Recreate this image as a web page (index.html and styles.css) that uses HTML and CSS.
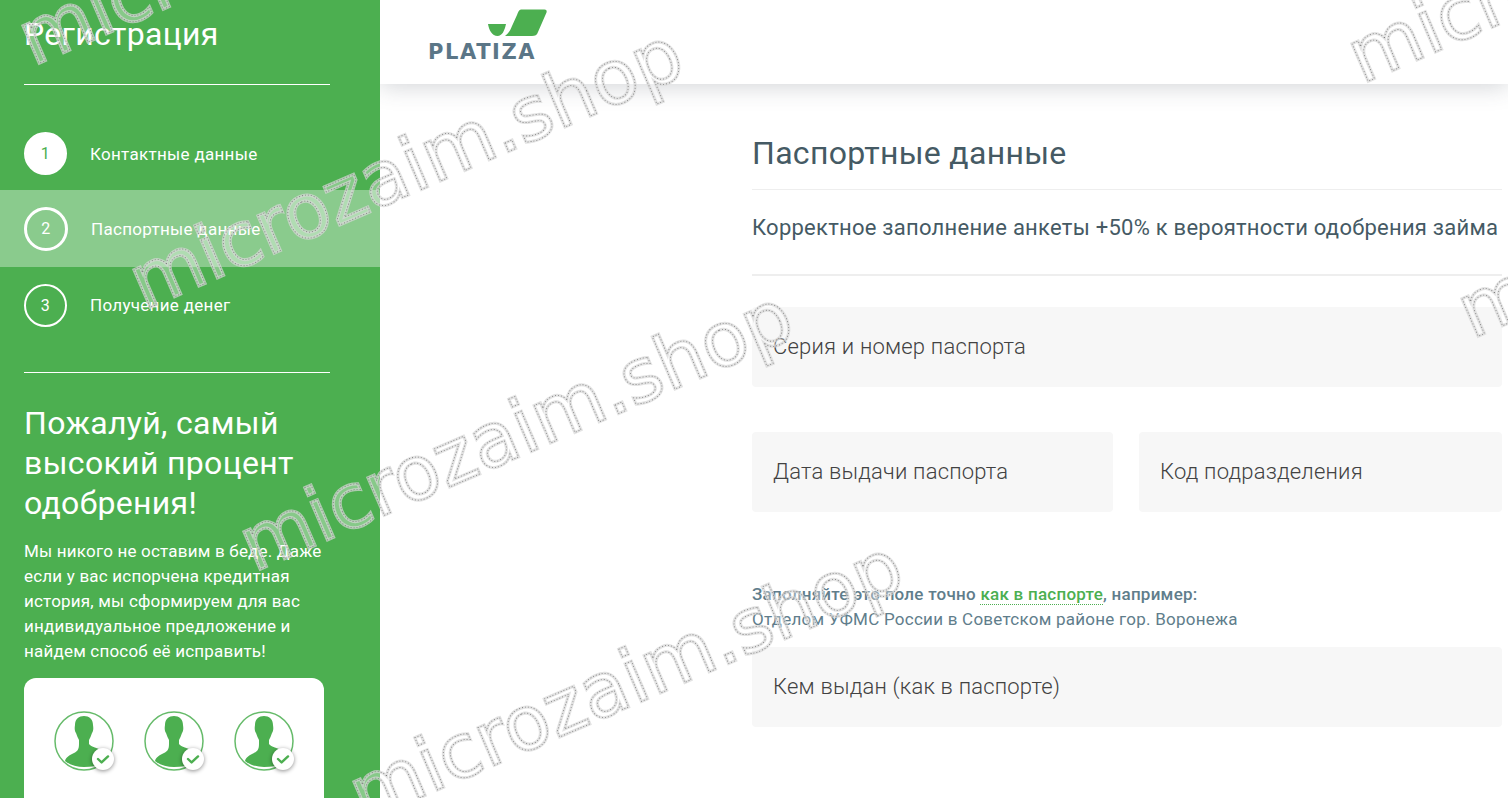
FILE: index.html
```html
<!DOCTYPE html>
<html lang="ru">
<head>
    <meta charset="UTF-8">
    <title>Регистрация</title>
    <link rel="stylesheet" href="styles.css">
</head>
<body>
    <svg class="defs" width="0" height="0">
        <symbol id="person" viewBox="0 0 72 72">
            <circle class="person-ring" cx="30" cy="30" r="29"/>
            <path class="person-body" d="M21 14C21 8 25 5 30 5 35 5 39 8 39 14 39.500 17 39.500 20 38 22 37 25 36 27 35 29V33C37 36 44 37 49 40L50 52C44 55 37 56 30 56 23 56 16 54 11 50 12 46 16 44 20 42 23 40.500 25 39 25 33V29C24 27 23 25 22 22 20.500 20 20.500 17 21 14Z"/>
            <circle class="person-badge" cx="49" cy="48" r="11"/>
            <path class="person-check" d="M44 48l3.600 3.400 6.400-6"/>
        </symbol>
    </svg>

    <div class="page">
        <aside class="sidebar">
            <h1 class="side-title">Регистрация</h1>
            <hr class="side-line">
            <div class="steps">
                <div class="step step-done"><span class="step-num">1</span><span>Контактные данные</span></div>
                <div class="step step-active"><span class="step-num">2</span><span>Паспортные данные</span></div>
                <div class="step"><span class="step-num">3</span><span>Получение денег</span></div>
            </div>
            <hr class="side-line">
            <h2 class="promo-title">Пожалуй, самый высокий процент одобрения!</h2>
            <p class="promo-text">Мы никого не оставим в беде. Даже если у вас испорчена кредитная история, мы сформируем для вас индивидуальное предложение и найдем способ её исправить!</p>
            <div class="promo-card">
                <svg class="person"><use href="#person"/></svg>
                <svg class="person"><use href="#person"/></svg>
                <svg class="person"><use href="#person"/></svg>
            </div>
        </aside>

        <div class="main">
            <header class="topbar">
                <div class="logo">
                    <svg class="logo-mark" width="60" height="28" viewBox="0 0 60 28">
                        <path d="M0 15H18C16.500 22 14 27 9.500 27 4 27 1 21 0 15z"/>
                        <path d="M33 .5H56.500c2 0 2.500 1.500 2 3L50 23c-1 3-3 4-6 4H17c3-2 5-5 7-10l5-11c1-3 2-5.500 4-5.500z"/>
                    </svg>
                    <span class="logo-name">PLATIZA</span>
                </div>
            </header>

            <main class="content">
                <h2 class="form-title">Паспортные данные</h2>
                <p class="form-sub">Корректное заполнение анкеты +50% к вероятности одобрения займа</p>
                <div class="field">Серия и номер паспорта</div>
                <div class="field-row">
                    <div class="field field-left">Дата выдачи паспорта</div>
                    <div class="field field-right">Код подразделения</div>
                </div>
                <p class="note"><b>Заполняйте это поле точно <a href="#">как в паспорте</a>, например:</b><br>Отделом УФМС России в Советском районе гор. Воронежа</p>
                <div class="field">Кем выдан (как в паспорте)</div>
            </main>
        </div>

        <svg class="watermarks" width="1508" height="798">
            <defs>
                <text id="mark" class="mark-text">microzaim.shop</text>
            </defs>
            <g transform="translate(33 66) rotate(-23.5)"><use class="mark-edge" href="#mark"/><use class="mark-dots" href="#mark"/></g>
            <g transform="translate(144 310) rotate(-23.5)"><use class="mark-edge" href="#mark"/><use class="mark-dots" href="#mark"/></g>
            <g transform="translate(254 572) rotate(-23.5)"><use class="mark-edge" href="#mark"/><use class="mark-dots" href="#mark"/></g>
            <g transform="translate(364 822) rotate(-23.5)"><use class="mark-edge" href="#mark"/><use class="mark-dots" href="#mark"/></g>
            <g transform="translate(1362 84) rotate(-23.5)"><use class="mark-edge" href="#mark"/><use class="mark-dots" href="#mark"/></g>
            <g transform="translate(1472 339) rotate(-23.5)"><use class="mark-edge" href="#mark"/><use class="mark-dots" href="#mark"/></g>
        </svg>
    </div>
</body>
</html>
```

FILE: styles.css
```css
* {
    box-sizing: border-box;
}
html, body {
    margin: 0;
    height: 798px;
    overflow: hidden;
}
body {
    font-family: Roboto, "Liberation Sans", sans-serif;
    background-color: white;
}
.defs {
    position: absolute;
}
.page {
    position: relative;
    display: flex;
    width: 1508px;
    height: 798px;
    overflow: hidden;
}

/* left column */
.sidebar {
    position: relative;
    z-index: 1;
    flex: 0 0 380px;
    background-color: #4caf50;
    color: white;
}
.side-title {
    margin: 14px 0 29px 24px;
    font-size: 32px;
    line-height: 41px;
    font-weight: 400;
    letter-spacing: 0.3px;
}
.side-line {
    width: 306px;
    height: 1px;
    margin: 0 0 0 24px;
    border: 0;
    background-color: white;
}
.steps {
    padding: 30px 0 29px;
}
.step {
    display: flex;
    align-items: center;
    gap: 23px;
    height: 76px;
    padding-left: 24px;
    font-size: 17px;
    letter-spacing: 0.3px;
}
.step-done {
    height: 75px;
    padding-top: 2px;
}
.step-active {
    height: 77px;
    gap: 23px;
    background-color: rgba(255, 255, 255, 0.35);
}
.step-num {
    display: flex;
    align-items: center;
    justify-content: center;
    width: 43px;
    height: 43px;
    border: 2px solid white;
    border-radius: 50%;
    font-size: 16px;
}
.step-active .step-num {
    width: 44px;
    height: 44px;
    border-width: 3px;
}
.step-done .step-num {
    background-color: white;
    color: #4caf50;
}
.promo-title {
    width: 300px;
    margin: 30px 0 16px 24px;
    font-size: 32px;
    line-height: 40px;
    font-weight: 400;
    letter-spacing: 0.33px;
}
.promo-text {
    width: 306px;
    margin: 0 0 14px 24px;
    font-size: 17px;
    line-height: 25px;
    letter-spacing: 0.2px;
}
.promo-card {
    display: flex;
    gap: 30px;
    width: 300px;
    height: 160px;
    margin-left: 24px;
    padding: 33px 0 0 30px;
    background-color: white;
    border-radius: 12px;
}
.person {
    flex: 0 0 60px;
    width: 72px;
    height: 72px;
    margin-right: -12px;
    overflow: visible;
}
.person-ring {
    fill: none;
    stroke: #66bb6a;
    stroke-width: 1.5;
}
.person-body {
    fill: #4caf50;
}
.person-badge {
    fill: white;
    filter: drop-shadow(0 1px 2px rgba(0, 0, 0, 0.45));
}
.person-check {
    fill: none;
    stroke: #4caf50;
    stroke-width: 2.4;
    stroke-linecap: round;
    stroke-linejoin: round;
}

/* right column */
.main {
    flex: 1;
}
.topbar {
    position: relative;
    height: 84px;
    padding-left: 48px;
    background-color: white;
    box-shadow: 0 3px 22px rgba(60, 70, 80, 0.22);
}
.logo {
    position: relative;
    width: 120px;
    height: 84px;
}
.logo-mark {
    display: block;
    position: absolute;
    left: 60px;
    top: 9px;
    fill: #4caf50;
}
.logo-name {
    position: absolute;
    left: 0;
    top: 41px;
    font-family: "DejaVu Sans", sans-serif;
    font-size: 21px;
    line-height: 22px;
    font-weight: 700;
    letter-spacing: 1.6px;
    color: #5b7687;
}
.content {
    width: 750px;
    margin-left: 372px;
}
.form-title {
    margin: 0;
    padding: 50px 0 17px;
    border-bottom: 1px solid #eeeeee;
    font-size: 32px;
    line-height: 38px;
    font-weight: 400;
    letter-spacing: 0.3px;
    color: #455a64;
}
.form-sub {
    margin: 0 0 31px;
    padding: 23px 0 31px;
    border-bottom: 2px solid #eeeeee;
    font-size: 22px;
    line-height: 30px;
    letter-spacing: 0.25px;
    color: #455a64;
}
.field {
    height: 80px;
    padding-left: 21px;
    border-radius: 4px;
    background-color: #f7f7f7;
    font-size: 22px;
    font-weight: 300;
    line-height: 80px;
    letter-spacing: 0.2px;
    color: #424242;
}
.field-row {
    display: flex;
    gap: 26px;
    margin-top: 45px;
}
.field-left {
    flex: 0 0 361px;
}
.field-right {
    flex: 1;
}
.note {
    margin: 70px 0 15px;
    font-size: 17px;
    line-height: 25px;
    letter-spacing: 0.25px;
    color: #607d8b;
}
.note b {
    font-weight: 500;
}
.note a {
    color: #4caf50;
    text-decoration: none;
    border-bottom: 1px dotted #4caf50;
}

/* stamped over the whole page */
.watermarks {
    position: absolute;
    z-index: 2;
    left: 0;
    top: 0;
    pointer-events: none;
}
.mark-text {
    font-family: "DejaVu Sans", sans-serif;
    font-size: 75px;
}
.mark-edge {
    fill: rgba(255, 255, 255, 0.33);
    stroke: rgba(215, 215, 215, 0.7);
    stroke-width: 3px;
}
.mark-dots {
    fill: none;
    stroke: #808080;
    stroke-width: 0.8px;
    stroke-dasharray: 1px 2px;
}
```
